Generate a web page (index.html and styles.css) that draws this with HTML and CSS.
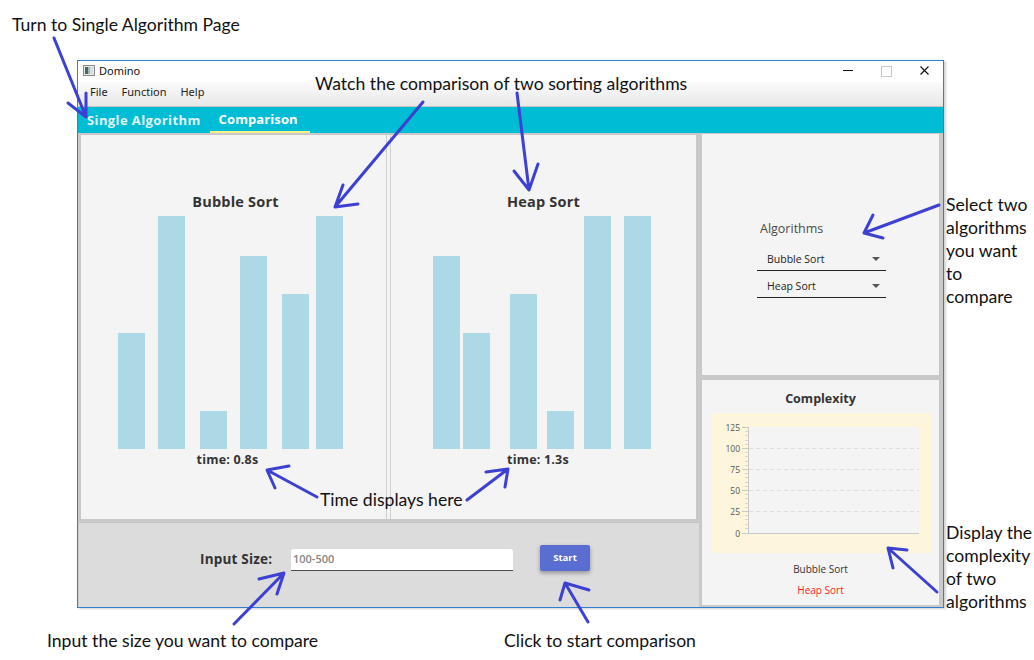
FILE: index.html
```html
<!DOCTYPE html>
<html>
<head>
<meta charset="utf-8">
<title>Domino</title>
<link rel="stylesheet" href="styles.css">
</head>
<body>
<div class="canvas">
  <div class="window">
    <div class="titlebar">
      <svg class="app-icon" width="12" height="11" viewBox="0 0 12 11">
        <rect x="0.5" y="0.5" width="11" height="10" fill="#e8e8e8" stroke="#8a8a8a"/>
        <rect x="2" y="2" width="3" height="7" fill="#3f6f52"/>
        <rect x="5" y="2" width="2" height="7" fill="#9fb7c9"/>
        <rect x="7" y="2" width="3" height="7" fill="#d9dde0"/>
      </svg>
      <span class="app-title">Domino</span>
      <div class="win-controls">
        <span class="wc wc-min"></span>
        <span class="wc wc-max"></span>
        <span class="wc wc-close">
          <svg width="9" height="9" viewBox="0 0 9 9"><path d="M0.5 0.5 L8.5 8.5 M8.5 0.5 L0.5 8.5" stroke="#111" stroke-width="1.1"/></svg>
        </span>
      </div>
    </div>
    <div class="menubar">
      <span class="menu-item">File</span>
      <span class="menu-item">Function</span>
      <span class="menu-item">Help</span>
    </div>
    <div class="tabbar">
      <span class="tab tab-single">Single Algorithm</span>
      <span class="tab tab-active">Comparison</span>
    </div>
    <div class="content">
      <div class="left-col">
        <div class="charts">
          <div class="chart chart-a">
            <div class="chart-title">Bubble Sort</div>
            <div class="bars bars-a">
              <div class="bar" style="height:116px;margin-left:0"></div>
              <div class="bar" style="height:233px;margin-left:13px"></div>
              <div class="bar" style="height:38px;margin-left:15px"></div>
              <div class="bar" style="height:193px;margin-left:13px"></div>
              <div class="bar" style="height:155px;margin-left:15px"></div>
              <div class="bar" style="height:233px;margin-left:7px"></div>
            </div>
            <div class="time">time: 0.8s</div>
          </div>
          <div class="chart chart-b">
            <div class="chart-title">Heap Sort</div>
            <div class="bars bars-b">
              <div class="bar" style="height:193px;margin-left:0"></div>
              <div class="bar" style="height:116px;margin-left:3px"></div>
              <div class="bar" style="height:155px;margin-left:20px"></div>
              <div class="bar" style="height:38px;margin-left:10px"></div>
              <div class="bar" style="height:233px;margin-left:10px"></div>
              <div class="bar" style="height:233px;margin-left:13px"></div>
            </div>
            <div class="time">time: 1.3s</div>
          </div>
        </div>
        <div class="input-panel">
          <span class="input-label">Input Size:</span>
          <div class="input-box">100-500</div>
          <button class="start-btn">Start</button>
        </div>
      </div>
      <div class="right-col">
        <div class="algo-panel">
          <div class="algos">
            <div class="algos-label">Algorithms</div>
            <div class="combo combo-first"><span>Bubble Sort</span><span class="caret"></span></div>
            <div class="combo"><span>Heap Sort</span><span class="caret"></span></div>
          </div>
        </div>
        <div class="complex-panel">
          <div class="complex-title">Complexity</div>
          <div class="complex-chart">
            <svg width="220" height="140" viewBox="0 0 220 140">
              <rect x="38" y="14" width="170" height="106" fill="#f4f4f4"/>
              <g stroke="#dedede" stroke-dasharray="4 3" stroke-width="1">
                <line x1="38" y1="35.5" x2="208" y2="35.5"/>
                <line x1="38" y1="56.5" x2="208" y2="56.5"/>
                <line x1="38" y1="77.5" x2="208" y2="77.5"/>
                <line x1="38" y1="98.5" x2="208" y2="98.5"/>
              </g>
              <g stroke="#c8c8c8" stroke-width="1">
                <line x1="37.5" y1="14" x2="37.5" y2="120"/>
                <line x1="37" y1="120.5" x2="208" y2="120.5"/>
                <line x1="31" y1="14.5" x2="37" y2="14.5"/>
                <line x1="31" y1="35.5" x2="37" y2="35.5"/>
                <line x1="31" y1="56.5" x2="37" y2="56.5"/>
                <line x1="31" y1="77.5" x2="37" y2="77.5"/>
                <line x1="31" y1="98.5" x2="37" y2="98.5"/>
                <line x1="31" y1="120.5" x2="37" y2="120.5"/>
              </g>
              <g stroke="#d6d6d6" stroke-width="1">
                <line x1="34" y1="18.5" x2="37" y2="18.5"/><line x1="34" y1="22.5" x2="37" y2="22.5"/><line x1="34" y1="27.5" x2="37" y2="27.5"/><line x1="34" y1="31.5" x2="37" y2="31.5"/>
                <line x1="34" y1="39.5" x2="37" y2="39.5"/><line x1="34" y1="43.5" x2="37" y2="43.5"/><line x1="34" y1="48.5" x2="37" y2="48.5"/><line x1="34" y1="52.5" x2="37" y2="52.5"/>
                <line x1="34" y1="60.5" x2="37" y2="60.5"/><line x1="34" y1="64.5" x2="37" y2="64.5"/><line x1="34" y1="69.5" x2="37" y2="69.5"/><line x1="34" y1="73.5" x2="37" y2="73.5"/>
                <line x1="34" y1="81.5" x2="37" y2="81.5"/><line x1="34" y1="85.5" x2="37" y2="85.5"/><line x1="34" y1="90.5" x2="37" y2="90.5"/><line x1="34" y1="94.5" x2="37" y2="94.5"/>
                <line x1="34" y1="102.5" x2="37" y2="102.5"/><line x1="34" y1="106.5" x2="37" y2="106.5"/><line x1="34" y1="111.5" x2="37" y2="111.5"/><line x1="34" y1="115.5" x2="37" y2="115.5"/>
              </g>
              <g class="axis-text" text-anchor="end">
                <text x="29" y="17.5">125</text>
                <text x="29" y="38.5">100</text>
                <text x="29" y="59.5">75</text>
                <text x="29" y="80.5">50</text>
                <text x="29" y="101.5">25</text>
                <text x="29" y="123.5">0</text>
              </g>
            </svg>
          </div>
          <div class="legend legend-a">Bubble Sort</div>
          <div class="legend legend-b">Heap Sort</div>
        </div>
      </div>
    </div>
  </div>

  <div class="note note-turn">Turn to Single Algorithm Page</div>
  <div class="note note-watch">Watch the comparison of two sorting algorithms</div>
  <div class="note note-select">Select two<br>algorithms<br>you want<br>to<br>compare</div>
  <div class="note note-display">Display the<br>complexity<br>of two<br>algorithms</div>
  <div class="note note-time">Time displays here</div>
  <div class="note note-input">Input the size you want to compare</div>
  <div class="note note-click">Click to start comparison</div>

  <svg class="arrows" width="1034" height="660" viewBox="0 0 1034 660">
    <g fill="none" stroke="#3c41d2" stroke-width="3" stroke-linecap="round" stroke-linejoin="round">
      <path d="M54 38 L86 117 M86 93 L86 117 L68 103"/>
      <path d="M423 102 L335 207 M343 185 L335 207 L358 204"/>
      <path d="M517 93 L529 190 M514 171 L529 190 L538 164"/>
      <path d="M939 205 L864 233 M873 215 L864 233 L883 238"/>
      <path d="M937 592 L888 548 M893 568 L888 548 L907 550"/>
      <path d="M317 497 L267 470 M275 488 L267 470 L289 466"/>
      <path d="M467 500 L508 469 M486 472 L508 469 L505 487"/>
      <path d="M234 624 L284 573 M259 579 L284 573 L277 594"/>
      <path d="M588 622 L565 583 M560 600 L565 583 L589 590"/>
    </g>
  </svg>
</div>
</body>
</html>
```

FILE: styles.css
```css
* { box-sizing: border-box; }
html, body { margin: 0; padding: 0; background: #ffffff; }
body { font-family: "Open Sans", "Noto Sans", sans-serif; }

.canvas {
  position: relative;
  width: 1034px;
  height: 660px;
  padding: 60px 0 0 77px;
  overflow: hidden;
}

.window {
  width: 867px;
  height: 548px;
  border: 1px solid #2f7fd1;
  background: #ffffff;
  display: flex;
  flex-direction: column;
  box-shadow: 2px 1px 2px rgba(0,0,0,0.18);
}

/* title bar */
.titlebar {
  height: 21px;
  flex: none;
  display: flex;
  align-items: center;
  padding-left: 5px;
  background: #ffffff;
}
.app-icon { display: block; margin-top: -2px; }
.app-title {
  font-family: "Noto Sans", sans-serif;
  font-size: 11px;
  color: #111;
  margin-left: 4px;
  margin-top: -2px;
}
.win-controls {
  margin-left: auto;
  display: flex;
  align-items: center;
  height: 100%;
  margin-top: -2px;
}
.wc { display: block; width: 38px; height: 21px; position: relative; }
.wc-min::after {
  content: ""; position: absolute; left: 14px; top: 10px; width: 10px; height: 1px; background: #111;
}
.wc-max::after {
  content: ""; position: absolute; left: 14px; top: 6px; width: 9px; height: 9px; border: 1px solid #c8c8c8;
}
.wc-close { display: flex; align-items: center; justify-content: center; }
.wc-close svg { display: block; }

/* menu bar */
.menubar {
  height: 25px;
  flex: none;
  display: flex;
  align-items: center;
  padding-left: 12px;
  padding-bottom: 5px;
  background: linear-gradient(#fbfbfb, #e7e7e7);
  border-bottom: 1px solid #c4c4c4;
  font-family: "Noto Sans", sans-serif;
  font-size: 11px;
  color: #222;
}
.menu-item { margin-right: 14px; }

/* tab bar */
.tabbar {
  height: 26px;
  flex: none;
  display: flex;
  align-items: stretch;
  background: #00bcd4;
  padding-left: 9px;
}
.tab {
  display: flex;
  align-items: center;
  font-weight: 700;
  font-size: 13px;
  color: #e3f6f9;
}
.tab-single {
  letter-spacing: 0.4px;
  padding: 0 9px 1px 0;
}
.tab-active {
  color: #ffffff;
  width: 100px;
  padding: 0 0 0 9px;
  letter-spacing: 0.1px;
  border-bottom: 2px solid #f6f28a;
}

/* content */
.content {
  flex: 1;
  display: flex;
  background: #cbcbcb;
  padding: 0 0 0 1px;
  gap: 1px;
}
.left-col {
  width: 620px;
  display: flex;
  flex-direction: column;
}
.charts {
  height: 388px;
  display: flex;
  border: 2px solid #c8c8c8;
  border-right-width: 3px;
  background: #f4f4f4;
  gap: 3px;
}
.chart {
  display: flex;
  flex-direction: column;
  align-items: center;
  padding-top: 56px;
  background: #f4f4f4;
}
.chart-a { width: 306px; border-right: 1px solid #cfcfcf; }
.chart-b { flex: 1; border-left: 1px solid #cfcfcf; }
.chart-title {
  font-weight: 700;
  font-size: 14.5px;
  letter-spacing: 0.2px;
  color: #333;
  line-height: 21px;
}
.chart-a .chart-title { margin-left: 4px; }
.bars {
  height: 233px;
  margin-top: 4px;
  display: flex;
  align-items: flex-end;
}
.bars-a { margin-right: 7px; }
.bars-b { margin-right: 3px; }
.bar {
  width: 27px;
  background: #add8e6;
  flex: none;
}
.time {
  font-weight: 700;
  font-size: 12.5px;
  letter-spacing: 0.2px;
  color: #333;
  margin-top: 2px;
  line-height: 17px;
}
.chart-a .time { margin-right: 12px; }
.chart-b .time { margin-right: 11px; }

.input-panel {
  flex: 1;
  margin-top: 1px;
  background: #dcdcdc;
  border-top: 1px solid #c4c4c4;
  display: flex;
  align-items: center;
  padding-left: 121px;
  padding-bottom: 12px;
}
.input-label {
  width: 91px;
  font-weight: 700;
  font-size: 13.5px;
  letter-spacing: 0.2px;
  color: #333;
}
.input-box {
  width: 222px;
  height: 22px;
  background: #ffffff;
  border-radius: 3px 3px 0 0;
  border-bottom: 1px solid #4a4a4a;
  font-size: 11px;
  font-weight: 600;
  color: #858585;
  padding: 2px 0 0 2px;
  margin-top: 1px;
}
.start-btn {
  margin-left: 27px;
  width: 50px;
  height: 26px;
  border: none;
  border-radius: 2px;
  background: #5a6ed2;
  color: #ffffff;
  font-family: "Open Sans", sans-serif;
  font-weight: 700;
  font-size: 9.5px;
  box-shadow: 0 2px 4px rgba(0,0,0,0.35);
  padding: 0;
  margin-top: -3px;
}

.right-col {
  flex: 1;
  display: flex;
  flex-direction: column;
  gap: 1px;
  padding-right: 2px;
}
.algo-panel {
  height: 244px;
  background: #f4f4f4;
  border: 2px solid #c8c8c8;
  border-top-width: 1px;
}
.algos {
  width: 129px;
  margin: 87px 0 0 55px;
}
.algos-label {
  font-size: 12.5px;
  color: #4a4a4a;
  line-height: 16px;
  padding-left: 3px;
}
.combo {
  height: 27px;
  border-bottom: 1px solid #222;
  display: flex;
  align-items: center;
  padding: 3px 6px 0 10px;
  font-size: 10.5px;
  color: #222;
}
.combo-first { margin-top: 7px; }
.combo .caret {
  margin-left: auto;
  width: 0; height: 0;
  border-left: 4px solid transparent;
  border-right: 4px solid transparent;
  border-top: 4px solid #555;
}
.complex-panel {
  flex: 1;
  background: #f4f4f4;
  border: 2px solid #c8c8c8;
  display: flex;
  flex-direction: column;
  align-items: center;
}
.complex-title {
  font-weight: 700;
  font-size: 12.5px;
  color: #333;
  margin-top: 10px;
  line-height: 18px;
}
.complex-chart {
  width: 220px;
  height: 140px;
  margin-top: 5px;
  background: #fdf6dc;
}
.complex-chart svg { display: block; }
.axis-text { font-family: "Open Sans", sans-serif; font-size: 8.5px; fill: #555; }
.legend {
  font-size: 10px;
  line-height: 14px;
}
.legend-a { color: #333; margin-top: 9px; }
.legend-b { color: #ff1a1a; margin-top: 7px; }

/* annotations */
.note {
  position: absolute;
  font-family: "Lato", "Liberation Sans", sans-serif;
  font-size: 17.6px;
  line-height: 23px;
  color: #111;
  white-space: nowrap;
}
.note-turn { left: 12px; top: 13px; }
.note-watch { left: 315px; top: 72px; }
.note-select { left: 946px; top: 193px; }
.note-display { left: 946px; top: 521px; }
.note-time { left: 320px; top: 488px; }
.note-input { left: 47px; top: 629px; }
.note-click { left: 504px; top: 629px; }

.arrows {
  position: absolute;
  left: 0;
  top: 0;
  pointer-events: none;
}
```
